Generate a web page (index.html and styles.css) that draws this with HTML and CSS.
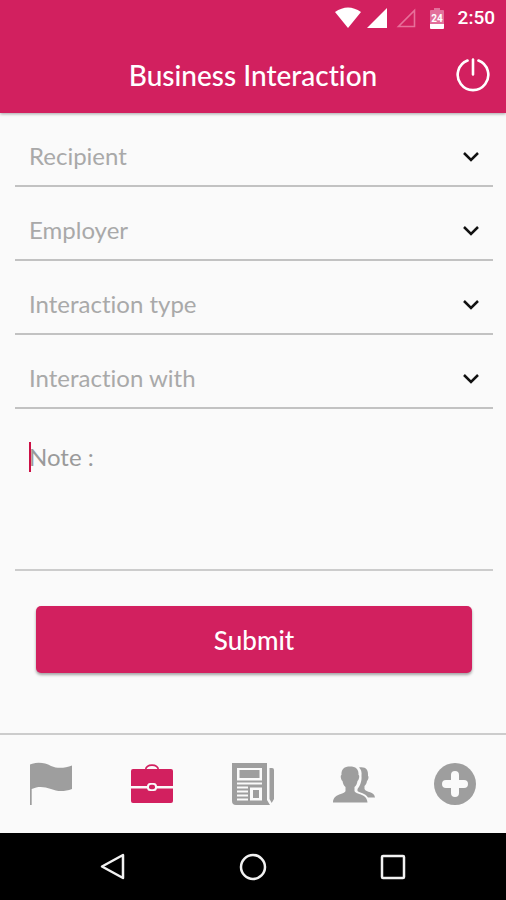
FILE: index.html
```html
<!DOCTYPE html>
<html lang="en">
<head>
<meta charset="utf-8">
<meta name="viewport" content="width=device-width, initial-scale=1">
<title>Business Interaction</title>
<link rel="stylesheet" href="styles.css">
</head>
<body>
<div class="screen">
  <header class="header">
    <div class="status">
      <svg width="26" height="22" viewBox="0 0 26 22" aria-hidden="true"><path d="M0 5Q13-4 26 5L13 21Z" fill="#fff"/></svg>
      <svg class="signal" width="20" height="20" viewBox="0 0 20 20" aria-hidden="true"><path d="M20 0V20H0Z" fill="#fff"/></svg>
      <svg class="signal-empty" width="20" height="20" viewBox="0 0 20 20" aria-hidden="true"><path d="M18.500 2.500V18.500H2.500Z" fill="none" stroke="#e8709a" stroke-width="1.600"/></svg>
      <svg class="battery" width="14" height="21" viewBox="0 0 14 21" aria-hidden="true"><path d="M4 0h6v2h3q1 0 1 1v13H0V3q0-1 1-1h3z" fill="#e2709b"/><path d="M0 16h14v4q0 1-1 1H1q-1 0-1-1z" fill="#fff"/><text x="7" y="14" text-anchor="middle" class="battery-level">24</text></svg>
      <span class="clock">2:50</span>
    </div>
    <div class="titlebar">
      <h1 class="title">Business Interaction</h1>
      <button class="power" type="button" aria-label="Log out">
        <svg width="34" height="34" viewBox="0 0 34 34" aria-hidden="true"><path d="M11.500 2.500A15.300 15.300 0 1 0 22.500 2.500M17 1.500V16.500" fill="none" stroke="#fff" stroke-width="2.600" stroke-linecap="round"/></svg>
      </button>
    </div>
  </header>

  <main class="content">
    <form class="form">
      <div class="field">
        <select class="select" aria-label="Recipient"><option>Recipient</option></select>
        <svg class="chevron" width="16" height="10" viewBox="0 0 16 10" aria-hidden="true"><path d="M1 1L8 8L15 1"/></svg>
      </div>
      <div class="field">
        <select class="select" aria-label="Employer"><option>Employer</option></select>
        <svg class="chevron" width="16" height="10" viewBox="0 0 16 10" aria-hidden="true"><path d="M1 1L8 8L15 1"/></svg>
      </div>
      <div class="field">
        <select class="select" aria-label="Interaction type"><option>Interaction type</option></select>
        <svg class="chevron" width="16" height="10" viewBox="0 0 16 10" aria-hidden="true"><path d="M1 1L8 8L15 1"/></svg>
      </div>
      <div class="field">
        <select class="select" aria-label="Interaction with"><option>Interaction with</option></select>
        <svg class="chevron" width="16" height="10" viewBox="0 0 16 10" aria-hidden="true"><path d="M1 1L8 8L15 1"/></svg>
      </div>
      <div class="note-field">
        <textarea class="note" aria-label="Note" placeholder="Note :"></textarea>
        <span class="caret"></span>
      </div>
      <button class="submit" type="submit">Submit</button>
    </form>
  </main>

  <nav class="tabs" aria-label="Sections">
    <a class="tab" href="#flag" aria-label="Flag">
      <svg width="44" height="44" viewBox="0 0 44 44" aria-hidden="true"><path d="M1 2.500C9-.500 16 1 22 4C29 7 36 6 43 3.500V27C35 30 28 29.500 22 27C15 24.500 9 24 2.700 27V43H1Z"/></svg>
    </a>
    <a class="tab tab-active" href="#business" aria-label="Business" aria-current="page">
      <svg width="44" height="44" viewBox="0 0 44 44" aria-hidden="true"><path d="M15.500 8C16.500 1.500 27.500 1.500 28.500 8" fill="none" stroke="currentColor" stroke-width="1.600"/><path d="M3 7H41Q43 7 43 9V24H27Q26.500 21 24 21H20Q17.500 21 17 24H1V9Q1 7 3 7Z"/><path d="M1 26.500H17Q17.500 29 20 29H24Q26.500 29 27 26.500H43V39Q43 41 41 41H3Q1 41 1 39Z"/><rect x="19" y="22.700" width="6" height="4.600" rx="2"/></svg>
    </a>
    <a class="tab" href="#news" aria-label="News">
      <svg width="44" height="44" viewBox="0 0 44 44" aria-hidden="true"><path fill-rule="evenodd" d="M1 1H36V38L39 43H5Q1 43 1 39ZM6 6V18.500H31V6ZM6 20.500V22.500H31V20.500ZM6 24.500V26.500H17V24.500ZM6 28.500V30.500H17V28.500ZM6 32.500V34.500H17V32.500ZM6 36.500V38.500H17V36.500ZM19 25.500V38.500H31V25.500Z"/><path d="M8.500 8H28.500V16H8.500ZM22 28H28V36H22ZM38.500 6H41Q43 6 43 8V37L40.700 41L38.500 37Z"/></svg>
    </a>
    <a class="tab" href="#people" aria-label="People">
      <svg width="44" height="44" viewBox="0 0 44 44" aria-hidden="true"><path d="M9.500 13C9 7 12.500 4.500 18 4.500S27 7 26.500 13C28 13 27 18 25.500 19C25 22 24 24 22.500 25V29C24 33 35 31 35.500 40.500H1C1.500 31 12 33 13.500 29V25C12 24 11 22 10.500 19C9 18 8 13 9.500 13Z"/><path d="M27 5.500C34 4.500 36.500 8 36 14C37 14 36.500 18 35 19C34.500 22 33.500 23 32.500 24V27C34 31 42.500 29 43 35.500H36C33 31 28 31 25.500 29V27C28 24 30 19 29.500 14C30 10 29 7 27 5.500Z"/></svg>
    </a>
    <a class="tab" href="#add" aria-label="Add">
      <svg width="44" height="44" viewBox="0 0 44 44" aria-hidden="true"><circle cx="22" cy="22" r="21"/><path d="M22 13V31M13 22H31" stroke="#fafafa" stroke-width="8" stroke-linecap="round"/></svg>
    </a>
  </nav>

  <div class="system">
    <button class="key" type="button" aria-label="Back"><svg width="28" height="28" viewBox="0 0 28 28" aria-hidden="true"><path d="M24 2V25L3 13.500Z"/></svg></button>
    <button class="key" type="button" aria-label="Home"><svg width="28" height="28" viewBox="0 0 28 28" aria-hidden="true"><circle cx="14" cy="14" r="12"/></svg></button>
    <button class="key" type="button" aria-label="Recent apps"><svg width="28" height="28" viewBox="0 0 28 28" aria-hidden="true"><rect x="3" y="3" width="22" height="22" rx="1"/></svg></button>
  </div>
</div>
</body>
</html>
```
FILE: styles.css
```css
* {
  box-sizing: border-box;
}

body {
  margin: 0;
  background: #fafafa;
  font-family: Lato, "Liberation Sans", sans-serif;
  font-variant-ligatures: none;
}

button,
select,
textarea {
  margin: 0;
  padding: 0;
  border: 0;
  border-radius: 0;
  background: none;
  font: inherit;
  font-variant-ligatures: none;
}

svg {
  display: block;
  flex: none;
}

.screen {
  display: flex;
  flex-direction: column;
  min-height: 100vh;
}

.header {
  background: #d2205f;
  color: #fff;
  box-shadow: 0 1px 3px rgba(0, 0, 0, 0.35);
}

.status {
  display: flex;
  align-items: center;
  justify-content: flex-end;
  height: 36px;
  padding-right: 11px;
}

.signal {
  margin-left: 6px;
}

.signal-empty {
  margin-left: 9px;
}

.battery {
  margin-left: 14px;
}

.battery-level {
  fill: #fff;
  font: 700 10px Roboto, sans-serif;
}

.clock {
  margin-left: 14px;
  font: 500 19px/36px Roboto, sans-serif;
}

.titlebar {
  display: grid;
  grid-template-columns: 34px 1fr 34px;
  align-items: center;
  height: 77px;
  padding: 0 16px;
}

.title {
  grid-column: 2;
  margin: 0;
  font-size: 28px;
  font-weight: 500;
  line-height: 36px;
  text-align: center;
}

.power {
  cursor: pointer;
}

.content {
  flex: 1;
}

.form {
  display: flex;
  flex-direction: column;
  padding: 0 13px 0 15px;
}

.field {
  display: grid;
  align-items: center;
  height: 74px;
  border-bottom: 2px solid #c2c2c2;
}

.select {
  grid-area: 1 / 1;
  width: 100%;
  height: 72px;
  padding: 12px 40px 0 14px;
  appearance: none;
  color: #a9a9a9;
  font-size: 24px;
}

.chevron {
  grid-area: 1 / 1;
  justify-self: end;
  margin: 16px 14px 0 0;
  fill: none;
  stroke: #111;
  stroke-width: 2.5;
  pointer-events: none;
}

.note-field {
  position: relative;
  height: 162px;
  border-bottom: 2px solid #ccc;
}

.note {
  display: block;
  width: 100%;
  height: 100%;
  padding: 32px 14px 0;
  outline: 0;
  resize: none;
  color: #555;
  font-size: 24px;
  line-height: 32px;
}

.note::placeholder {
  color: #9a9a9a;
}

.caret {
  position: absolute;
  top: 33px;
  left: 14px;
  width: 2px;
  height: 30px;
  background: #cc1046;
}

.submit {
  height: 67px;
  margin: 35px 21px 0;
  border-radius: 5px;
  background: #d2205f;
  box-shadow: 0 2px 3px rgba(0, 0, 0, 0.35);
  color: #fff;
  font-size: 26px;
  font-weight: 500;
}

.tabs {
  display: grid;
  grid-template-columns: repeat(5, 1fr);
  height: 100px;
  border-top: 2px solid #ccc;
}

.tab {
  display: grid;
  place-items: center;
  color: #9e9e9e;
}

.tab svg {
  fill: currentColor;
}

.tab-active {
  color: #d2205f;
}

.system {
  display: flex;
  align-items: center;
  justify-content: center;
  gap: 112px;
  height: 67px;
  background: #000;
}

.key svg {
  fill: none;
  stroke: #f2f2f2;
  stroke-width: 2.5;
  stroke-linejoin: round;
}
```
